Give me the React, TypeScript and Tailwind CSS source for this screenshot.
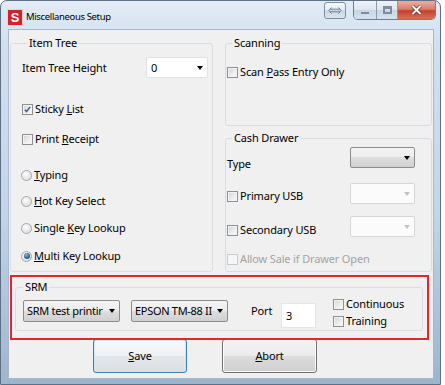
import type { ReactNode } from 'react'
import clsx from 'clsx'

function Arrow({ color = '#000' }: { color?: string }) {
  return (
    <svg width="6" height="4" viewBox="0 0 6 4" className="shrink-0">
      <path d="M0 0h6L3 4z" fill={color} />
    </svg>
  )
}

function CheckBox({ checked = false, disabled = false }: { checked?: boolean; disabled?: boolean }) {
  return (
    <span
      className={clsx(
        'flex h-[11px] w-[11px] shrink-0 items-center justify-center border',
        disabled
          ? 'border-[#cacaca] bg-[#f6f6f6]'
          : 'border-[#8e8f8f] bg-[linear-gradient(135deg,#cfd2d6_0%,#eeeeee_60%,#fbfbfb_100%)] shadow-[inset_0_0_0_1px_#f4f4f4]'
      )}
    >
      {checked && (
        <svg width="7" height="7" viewBox="0 0 8 8">
          <path d="M1 4.2l2 2.2L7 1" fill="none" stroke="#3d5a8a" strokeWidth="1.7" />
        </svg>
      )}
    </span>
  )
}

function Radio({ checked = false }: { checked?: boolean }) {
  return (
    <span className="-ml-[1px] flex h-[11px] w-[11px] shrink-0 items-center justify-center rounded-full border border-[#a3a6aa] bg-[radial-gradient(circle_at_40%_35%,#fdfdfd,#d4d6d9)]">
      {checked && (
        <span className="h-[6px] w-[6px] rounded-full bg-[radial-gradient(circle_at_40%_35%,#8fb9d6,#1d4f73_70%)]" />
      )}
    </span>
  )
}

function Option({ children, checked, radio, disabled }: { children: ReactNode; checked?: boolean; radio?: boolean; disabled?: boolean }) {
  return (
    <div className={clsx('flex h-[16px] items-center gap-[2px] leading-[16px]', disabled ? 'text-[#a3a3a3]' : 'text-black')}>
      {radio ? <Radio checked={checked} /> : <CheckBox checked={checked} disabled={disabled} />}
      <span className="whitespace-nowrap">{children}</span>
    </div>
  )
}

type DropKind = 'gray' | 'white' | 'off'

function Drop({ text = '', kind, w, h }: { text?: string; kind: DropKind; w: string; h: string }) {
  return (
    <div
      className={clsx(
        'flex shrink-0 items-center justify-between gap-[2px] rounded-[2px] border pl-[3px] pr-[4px] leading-[16px]',
        w,
        h,
        kind === 'gray' && 'border-[#8c8c8c] bg-[linear-gradient(#f4f4f4_0%,#ececec_50%,#dedede_50%,#d0d0d0_100%)]',
        kind === 'white' && 'border-[#e2e2e2] bg-white pl-[4px]',
        kind === 'off' && 'border-[#d6d6d6] bg-[#fbfbfb]'
      )}
    >
      <span className="whitespace-nowrap tracking-[-0.3px]">{text}</span>
      <Arrow color={kind === 'off' ? '#c4c4c4' : '#000'} />
    </div>
  )
}

function Group({ title, className, children }: { title: string; className?: string; children: ReactNode }) {
  return (
    <fieldset className={clsx('rounded-[3px] border border-[#d8dde3]', className)}>
      <legend className="ml-[5px] px-[2px] leading-[16px] text-black">{title}</legend>
      {children}
    </fieldset>
  )
}

function WinButton({ children, primary }: { children: ReactNode; primary?: boolean }) {
  return (
    <button
      className={clsx(
        'flex h-[34px] items-center justify-center rounded-[3px] border text-black',
        primary
          ? 'w-[94px] border-[#3c7fb1] bg-[linear-gradient(#f7f9fb_0%,#eef1f4_50%,#e3e7ea_50%,#dadfe3_100%)] shadow-[inset_0_0_0_1px_#cde6f6]'
          : 'w-[95px] border-[#707070] bg-[linear-gradient(#f2f2f2_0%,#ebebeb_50%,#dddddd_50%,#cfcfcf_100%)] shadow-[inset_0_0_0_1px_#fbfbfb]'
      )}
    >
      {children}
    </button>
  )
}

export default function App() {
  return (
    <div className="h-[385px] w-[445px] overflow-hidden bg-white font-['Noto_Sans',sans-serif] text-[11px] tracking-[-0.15px]">
      <div className="flex h-[385px] w-[441px] flex-col rounded-t-[7px] border border-[#5d7086] bg-[linear-gradient(180deg,#e3ecf6_0%,#d3e0ee_10%,#c3d5e8_55%,#9db5cc_100%)]">
        {/* title bar */}
        <div className="flex h-[28px] shrink-0 items-start pr-[4px]">
          <div className="ml-[7px] mt-[9px] flex h-[15px] w-[14px] items-center justify-center bg-[#d2232a] font-['Liberation_Sans',sans-serif] text-[13px] font-bold leading-none tracking-normal text-white shadow-[0_0_0_1px_#f3d0d0]">
            S
          </div>
          <span className="ml-[4px] mt-[8px] text-[9.5px] leading-[16px] tracking-[-0.35px] text-black">Miscellaneous Setup</span>
          <div className="flex-1" />
          <div className="mt-[1px] flex h-[17px] w-[22px] items-center justify-center rounded-[3px] border border-[#7d8fa3] bg-[linear-gradient(#f5f8fb_0%,#e3eaf2_50%,#cdd8e4_50%,#dbe4ee_100%)]">
            <svg width="14" height="7" viewBox="0 0 14 7">
              <path d="M3.5 0.5L0.8 3.5 3.5 6.5M10.5 0.5L13.2 3.5 10.5 6.5M2 2.2h10M2 4.8h10" fill="none" stroke="#6e7f91" strokeWidth="1" />
            </svg>
          </div>
          <div className="ml-[7px] flex h-[19px] overflow-hidden rounded-b-[5px] border border-t-0 border-[#6c7d90]">
            <div className="flex w-[23px] items-center justify-center border-r border-[#8a9bb0] bg-[linear-gradient(#eef3f9_0%,#dce6f1_50%,#c6d5e5_50%,#d6e2ee_100%)]">
              <span className="mt-[5px] h-[2px] w-[8px] bg-[#7d8b9a]" />
            </div>
            <div className="flex w-[21px] items-center justify-center border-r border-[#8a9bb0] bg-[linear-gradient(#eef3f9_0%,#dce6f1_50%,#c6d5e5_50%,#d6e2ee_100%)]">
              <span className="h-[8px] w-[9px] border-[2px] border-t-[3px] border-[#7d8b9a]" />
            </div>
            <div className="flex w-[37px] items-center justify-center bg-[linear-gradient(#eab0a2_0%,#d87e6b_45%,#c5412d_55%,#d9705a_100%)]">
              <svg width="11" height="10" viewBox="0 0 11 10">
                <path d="M1.5 1l8 8M9.5 1l-8 8" stroke="#6b2418" strokeWidth="3.4" />
                <path d="M1.5 1l8 8M9.5 1l-8 8" stroke="#fff" strokeWidth="2" />
              </svg>
            </div>
          </div>
        </div>

        {/* client area */}
        <div className="relative ml-[7px] h-[350px] w-[426px] border border-[#a7b8ca] bg-[#f0f0f0]">
          <div className="flex pl-[1px] pt-[5px]">
            <Group title="Item Tree" className="h-[237px] w-[203px] pl-[11px] pr-[4px]">
              <div className="mt-[6px] flex h-[21px] items-center justify-between">
                <span className="leading-[16px]">Item Tree Height</span>
                <Drop text="0" kind="white" w="w-[62px]" h="h-[21px]" />
              </div>
              <div className="mt-[23px]">
                <Option checked>
                  Sticky <u>L</u>ist
                </Option>
              </div>
              <div className="mt-[14px]">
                <Option>
                  Print <u>R</u>eceipt
                </Option>
              </div>
              <div className="mt-[20px]">
                <Option radio>
                  <u>T</u>yping
                </Option>
              </div>
              <div className="mt-[10px]">
                <Option radio>
                  <u>H</u>ot Key Select
                </Option>
              </div>
              <div className="mt-[11px]">
                <Option radio>
                  Single <u>K</u>ey Lookup
                </Option>
              </div>
              <div className="mt-[12px]">
                <Option radio checked>
                  <u>M</u>ulti Key Lookup
                </Option>
              </div>
            </Group>

            <div className="ml-[12px] flex w-[207px] flex-col">
              <Group title="Scanning" className="h-[91px] pl-[1px]">
                <div className="mt-[13px]">
                  <Option>
                    Scan <u>P</u>ass Entry Only
                  </Option>
                </div>
              </Group>
              <Group title="Cash Drawer" className="mt-[4px] h-[142px] pl-[1px] pr-[16px]">
                <div className="mt-[1px] flex h-[21px] items-start justify-between">
                  <span className="mt-[9px] leading-[16px]">Type</span>
                  <Drop kind="gray" w="w-[65px]" h="h-[21px]" />
                </div>
                <div className="mt-[15px] flex h-[21px] items-start justify-between">
                  <div className="mt-[5px]">
                    <Option>Primary USB</Option>
                  </div>
                  <Drop kind="off" w="w-[65px]" h="h-[21px]" />
                </div>
                <div className="mt-[12px] flex h-[21px] items-start justify-between">
                  <div className="mt-[6px]">
                    <Option>Secondary USB</Option>
                  </div>
                  <Drop kind="off" w="w-[65px]" h="h-[21px]" />
                </div>
                <div className="mt-[14px]">
                  <Option disabled>Allow Sale if Drawer Open</Option>
                </div>
              </Group>
            </div>
          </div>

          <Group title="SRM" className="ml-[6px] mt-[7px] h-[52px] w-[408px] pl-[7px] [&>legend]:ml-0">
            <div className="flex items-start">
              <div className="mt-[5px]">
                <Drop text="SRM test printir" kind="gray" w="w-[97px]" h="h-[22px]" />
              </div>
              <div className="ml-[11px] mt-[5px]">
                <Drop text="EPSON TM-88 II" kind="gray" w="w-[97px]" h="h-[22px]" />
              </div>
              <span className="ml-[23px] mt-[8px] w-[30px] leading-[16px]">Port</span>
              <div className="mt-[8px] flex h-[25px] w-[35px] items-center border border-[#e4e4e4] bg-white pl-[4px] leading-[16px]">
                3
              </div>
              <div className="ml-[17px] mt-[1px] flex flex-col gap-[1px]">
                <Option>Continuous</Option>
                <Option>Training</Option>
              </div>
            </div>
          </Group>

          <div className="ml-[84px] mt-[8px] flex gap-[35px]">
            <WinButton primary>
              <span>
                <u>S</u>ave
              </span>
            </WinButton>
            <WinButton>
              <span>
                <u>A</u>bort
              </span>
            </WinButton>
          </div>

          {/* red highlight drawn over the screenshot */}
          <div className="pointer-events-none absolute left-[1px] top-[245px] h-[65px] w-[419px] border-2 border-[#e1262e]" />
        </div>
      </div>
    </div>
  )
}
